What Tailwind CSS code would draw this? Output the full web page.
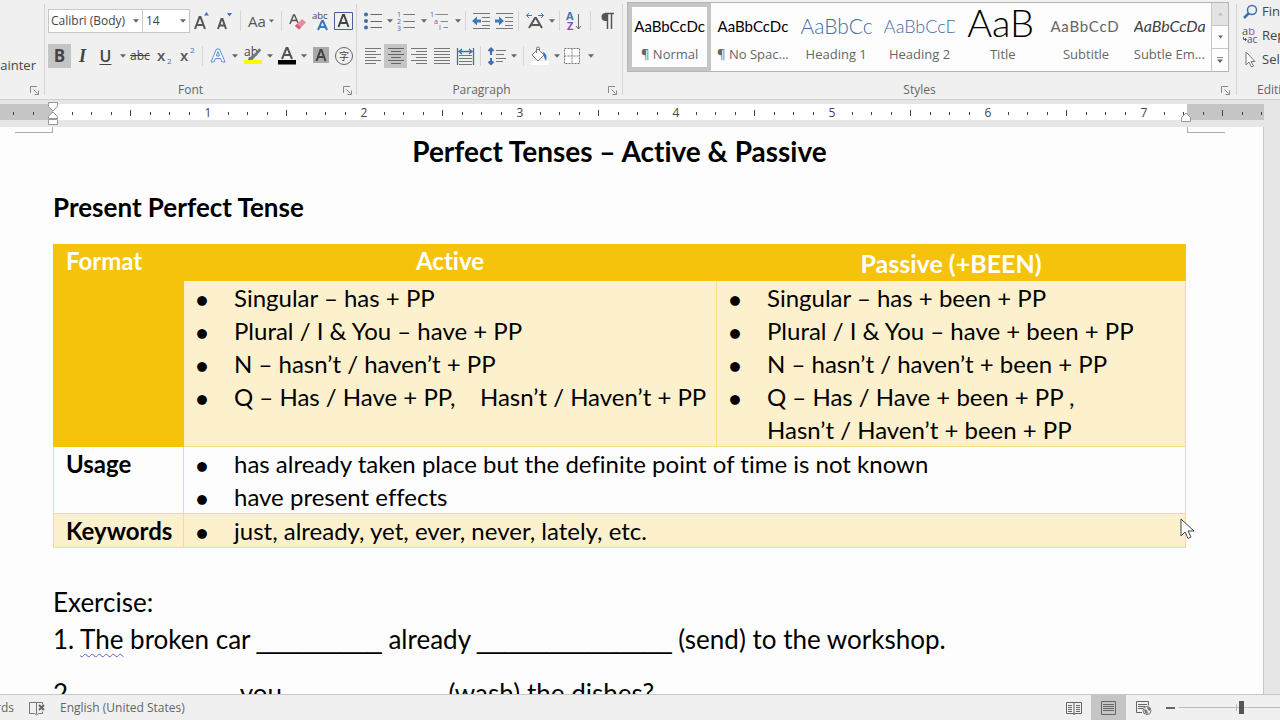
<!DOCTYPE html>
<html lang="en">
<head>
    <meta charset="UTF-8">
    <meta name="viewport" content="width=device-width, initial-scale=1.0">
    <title>Perfect Tenses – Active &amp; Passive</title>
    <script src="https://cdn.jsdelivr.net/npm/@tailwindcss/browser@4"></script>
</head>
<body class="flex flex-col h-screen overflow-hidden bg-[#e6e6e6] font-['Open_Sans','Noto_Sans_CJK_SC',sans-serif] text-[12px] text-[#444]">

    <!-- shared icons -->
    <svg class="hidden" xmlns="http://www.w3.org/2000/svg">
        <symbol id="caret" viewBox="0 0 7 4"><path d="M0 0h7L3.500 4z" fill="#666"/></symbol>
        <symbol id="launcher" viewBox="0 0 9 9"><path d="M.5 7V.5H7M3.500 3.500l4 4M8.500 4.500v4h-4" fill="none" stroke="#888"/></symbol>
    </svg>

    <!-- ribbon -->
    <header class="flex h-[100px] shrink-0 bg-[#f0f0f0] border-b border-[#cfcfcf] overflow-hidden">

        <!-- clipboard -->
        <section class="relative w-[45px] shrink-0 my-1 border-r border-[#d5d5d5]">
            <button class="flex justify-end w-[36px] mt-[51px] text-[13px] leading-5 whitespace-nowrap">Format Painter</button>
            <button class="absolute right-[5px] bottom-0" aria-label="Clipboard options"><svg class="size-[9px]"><use href="#launcher"/></svg></button>
        </section>

        <!-- font -->
        <section class="relative w-[312px] shrink-0 pl-[3px] my-1 border-r border-[#d5d5d5]">
            <div class="flex items-center h-6 mt-[5px]">
                <label class="relative w-[95px] h-6">
                    <span class="sr-only">Font name</span>
                    <select class="appearance-none block w-full h-full pl-[2px] pr-2 bg-white border border-[#c6c6c6] text-[12px]"><option>Calibri (Body)</option></select>
                    <svg class="absolute right-1 top-[10px] w-[6px] h-[4px] pointer-events-none"><use href="#caret"/></svg>
                </label>
                <label class="relative w-[47px] h-6">
                    <span class="sr-only">Font size</span>
                    <select class="appearance-none block w-full h-full pl-[3px] bg-white border border-l-0 border-[#c6c6c6] text-[12px]"><option>14</option></select>
                    <svg class="absolute right-1 top-[10px] w-[6px] h-[4px] pointer-events-none"><use href="#caret"/></svg>
                </label>
                <button class="w-[23px] h-6" aria-label="Grow font"><svg viewBox="0 0 23 24"><path d="M5 20l4.500-12h1L15 20M6.500 16h7" fill="none" stroke="#555" stroke-width="2"/><path d="M14 6.500h5L16.500 3z" fill="#4472b8"/></svg></button>
                <button class="w-[23px] h-6" aria-label="Shrink font"><svg viewBox="0 0 23 24"><path d="M5 20l3.500-10h1L13 20M6.500 16.500h5" fill="none" stroke="#555" stroke-width="2"/><path d="M14 4h5l-2.500 3.500z" fill="#4472b8"/></svg></button>
                <span class="w-px h-5 mx-1 bg-[#d5d5d5]"></span>
                <button class="flex items-center justify-center gap-[3px] w-[32px] h-6 text-[15px] text-[#555]" aria-label="Change case">Aa<svg class="w-[5px] h-[4px]"><use href="#caret"/></svg></button>
                <span class="w-px h-5 mx-1 bg-[#d5d5d5]"></span>
                <button class="w-[23px] h-6" aria-label="Clear formatting"><svg viewBox="0 0 23 24"><path d="M4 15l3.500-9h1L12 14M5.500 11.500h5" fill="none" stroke="#555" stroke-width="1.500"/><path d="M9 17l7-7 4 3.500-7 7z" fill="#ea8a9e"/><path d="M9 17l2-2 4 3.500-2 2z" fill="#d95b7b"/></svg></button>
                <button class="w-[23px] h-6" aria-label="Phonetic guide"><svg viewBox="0 0 23 24"><text x="3" y="10" font-size="9.500" fill="#444">abc</text><path d="M9 21l4-9h1l4 9M10.500 18h6" fill="none" stroke="#3a78bd" stroke-width="2"/></svg></button>
                <button class="w-[23px] h-6" aria-label="Character border"><svg viewBox="0 0 23 24"><path d="M2.500 3.500h18v17h-18z" fill="none" stroke="#4d5f9a"/><path d="M6.500 18l4.500-12h1L16.500 18M8 14h7" fill="none" stroke="#444" stroke-width="2"/></svg></button>
            </div>
            <div class="flex items-center h-6 mt-[11px]">
                <button class="w-[23px] h-6 bg-[#c5c5c5] font-bold text-[17px] leading-6">B</button>
                <button class="w-[23px] h-6 font-['Liberation_Serif',serif] font-bold italic text-[18px] leading-6">I</button>
                <button class="w-[23px] h-6 text-[16px] font-semibold leading-6 underline underline-offset-2">U</button>
                <button class="w-[11px] h-6" aria-label="Underline style"><svg class="w-[6px] h-[4px] mx-auto"><use href="#caret"/></svg></button>
                <button class="w-[24px] h-6 text-[12px] line-through">abc</button>
                <button class="w-[24px] h-6" aria-label="Subscript"><svg viewBox="0 0 24 24"><text x="5" y="17" font-size="15" font-weight="600" fill="#555">x</text><text x="15" y="20" font-size="8" fill="#4472b8">2</text></svg></button>
                <button class="w-[22px] h-6" aria-label="Superscript"><svg viewBox="0 0 22 24"><text x="4" y="17" font-size="15" font-weight="600" fill="#555">x</text><text x="14" y="9" font-size="8" fill="#4472b8">2</text></svg></button>
                <span class="w-px h-5 mx-1 bg-[#d5d5d5]"></span>
                <button class="w-[22px] h-6" aria-label="Text effects"><svg viewBox="0 0 22 24"><path d="M4 18L9.500 5h3L18 18h-3l-1.300-3.500H8.300L7 18zM9.300 12h3.400L11 7.500z" fill="#fff" stroke="#5b8fd0"/></svg></button>
                <button class="w-[11px] h-6" aria-label="Text effects menu"><svg class="w-[6px] h-[4px] mx-auto"><use href="#caret"/></svg></button>
                <button class="w-[24px] h-6" aria-label="Highlight"><svg viewBox="0 0 24 24"><text x="4" y="12" font-size="12" fill="#444">ab</text><path d="M20.500 5.500L12 15l-3 1 1-3M20 5l-7 8" stroke="#777" stroke-width="2" fill="#777"/><path d="M4 16h18v4H4z" fill="#fbfb00"/></svg></button>
                <button class="w-[11px] h-6" aria-label="Highlight colour"><svg class="w-[6px] h-[4px] mx-auto"><use href="#caret"/></svg></button>
                <button class="w-[23px] h-6" aria-label="Font colour"><svg viewBox="0 0 23 24"><path d="M7 15l4.500-11h1L17 15M8.500 11h7" fill="none" stroke="#555" stroke-width="2"/><path d="M3 16h18v4.500H3z" fill="#000"/></svg></button>
                <button class="w-[11px] h-6" aria-label="Font colour menu"><svg class="w-[6px] h-[4px] mx-auto"><use href="#caret"/></svg></button>
                <button class="w-[23px] h-6" aria-label="Character shading"><svg viewBox="0 0 23 24"><path d="M4 3h16v16H4z" fill="#aaa"/><path d="M7.500 17l4-11h1l4 11M9 13h6" fill="none" stroke="#444" stroke-width="2"/></svg></button>
                <button class="w-[23px] h-6" aria-label="Enclose characters"><svg viewBox="0 0 23 24"><circle cx="12" cy="12" r="8.500" fill="none" stroke="#666"/><text x="7" y="16" font-size="10" fill="#444">字</text></svg></button>
            </div>
            <h2 class="absolute inset-x-0 -bottom-[3px] pr-[20px] text-center leading-4 text-[#666]">Font</h2>
            <button class="absolute right-[4px] bottom-0" aria-label="Font options"><svg class="size-[9px]"><use href="#launcher"/></svg></button>
        </section>

        <!-- paragraph -->
        <section class="relative w-[266px] shrink-0 pl-1 my-1 border-r border-[#d5d5d5]">
            <div class="flex items-center h-6 mt-[5px]">
                <button class="w-[23px] h-6" aria-label="Bullets"><svg viewBox="0 0 23 24"><g fill="#3f6ea8"><circle cx="5" cy="5.500" r="2"/><circle cx="5" cy="12" r="2"/><circle cx="5" cy="18.500" r="2"/></g><path d="M9.500 5.500H21M9.500 12.500H21M9.500 18.500H21" stroke="#666"/></svg></button>
                <button class="w-[11px] h-6" aria-label="Bullet library"><svg class="w-[6px] h-[4px] mx-auto"><use href="#caret"/></svg></button>
                <button class="w-[23px] h-6" aria-label="Numbering"><svg viewBox="0 0 23 24"><g font-size="7" fill="#4d63b0"><text x="2" y="8">1</text><text x="2" y="15">2</text><text x="2" y="22">3</text></g><path d="M8.500 5.500H20M8.500 12.500H20M8.500 18.500H20" stroke="#777"/></svg></button>
                <button class="w-[11px] h-6" aria-label="Numbering library"><svg class="w-[6px] h-[4px] mx-auto"><use href="#caret"/></svg></button>
                <button class="w-[23px] h-6" aria-label="Multilevel list"><svg viewBox="0 0 23 24"><g font-size="7" fill="#4d63b0"><text x="1" y="8">1</text><text x="5" y="15">a</text><text x="10" y="21">i</text></g><path d="M6.500 5.500H19M11.500 12.500H19M14.500 18.500H19" stroke="#888"/></svg></button>
                <button class="w-[11px] h-6" aria-label="List library"><svg class="w-[6px] h-[4px] mx-auto"><use href="#caret"/></svg></button>
                <span class="w-px h-5 mx-[2px] bg-[#d5d5d5]"></span>
                <button class="w-[23px] h-6" aria-label="Decrease indent"><svg viewBox="0 0 23 24"><path d="M5 4.500h17M14 8.500h8M14 12.500h8M14 16.500h8M5 19.500h17" stroke="#777"/><path d="M4 12l5-4.500v3h4v3H9v3z" fill="#3f78b8"/></svg></button>
                <button class="w-[23px] h-6" aria-label="Increase indent"><svg viewBox="0 0 23 24"><path d="M5 4.500h17M14 8.500h8M14 12.500h8M14 16.500h8M5 19.500h17" stroke="#777"/><path d="M13 12L8 7.500v3H4v3h4v3z" fill="#3f78b8"/></svg></button>
                <span class="w-px h-5 mx-1 bg-[#d5d5d5]"></span>
                <button class="w-[23px] h-6" aria-label="Character scaling"><svg viewBox="0 0 23 24"><path d="M6 19l6-10h1l6 10M8.500 16h8" fill="none" stroke="#555" stroke-width="2"/><path d="M3.500 6.500H9M6 4L3.500 6.500 6 9M15 6.500h5.500M18 4l2.500 2.500L18 9" fill="none" stroke="#3f78b8"/></svg></button>
                <button class="w-[11px] h-6" aria-label="Scaling menu"><svg class="w-[6px] h-[4px] mx-auto"><use href="#caret"/></svg></button>
                <span class="w-px h-5 mx-[2px] bg-[#d5d5d5]"></span>
                <button class="w-[23px] h-6" aria-label="Sort"><svg viewBox="0 0 23 24"><g font-size="11" font-weight="bold"><text x="4" y="11" fill="#3f78b8">A</text><text x="5" y="21" fill="#8a4fb5">Z</text></g><path d="M16.500 5v15M14 17l2.500 3 2.500-3" fill="none" stroke="#666"/></svg></button>
                <span class="w-px h-5 mx-[5px] bg-[#d5d5d5]"></span>
                <button class="w-[23px] h-6" aria-label="Show marks"><svg viewBox="0 0 23 24"><path d="M11 4H9.500a4 4 0 000 8H11z" fill="#555"/><path d="M9 4.500h9M11.500 4v16M15.500 4v16" stroke="#555" stroke-width="1.500"/></svg></button>
            </div>
            <div class="flex items-center h-6 mt-[11px]">
                <button class="w-[23px] h-6" aria-label="Align left"><svg viewBox="0 0 23 24"><path d="M4 4.500h16M4 7.500h11M4 10.500h16M4 13.500h11M4 16.500h16M4 19.500h11" stroke="#777"/></svg></button>
                <button class="w-[23px] h-6 bg-[#c5c5c5]" aria-label="Center"><svg viewBox="0 0 23 24"><path d="M4 4.500h16M7 7.500h10M4 10.500h16M7 13.500h10M4 16.500h16M7 19.500h10" stroke="#666"/></svg></button>
                <button class="w-[23px] h-6" aria-label="Align right"><svg viewBox="0 0 23 24"><path d="M4 4.500h16M9 7.500h11M4 10.500h16M9 13.500h11M4 16.500h16M9 19.500h11" stroke="#777"/></svg></button>
                <button class="w-[23px] h-6" aria-label="Justify"><svg viewBox="0 0 23 24"><path d="M4 4.500h16M4 7.500h16M4 10.500h16M4 13.500h16M4 16.500h16M4 19.500h16" stroke="#777"/></svg></button>
                <button class="w-[23px] h-6" aria-label="Distribute"><svg viewBox="0 0 23 24"><path d="M4.500 4v17M20.500 4v17M6 7.500h13M9 5L6 7.500 9 10M16 5l3 2.500-3 2.500" fill="none" stroke="#3f6eb0" stroke-width="1.300"/><path d="M6 11.500h13M6 14.500h13M6 17.500h13M6 20.500h13" stroke="#777"/></svg></button>
                <span class="w-px h-5 mx-1 bg-[#d5d5d5]"></span>
                <button class="w-[23px] h-6" aria-label="Line spacing"><svg viewBox="0 0 23 24"><path d="M6 5v6M6 14v6M3.500 7L6 4.500 8.500 7M3.500 17.500L6 20l2.500-2.500" fill="none" stroke="#3f6eb0" stroke-width="2"/><path d="M11 6.500h10M11 10.500h8M11 14.500h10M11 17.500h7" stroke="#777"/></svg></button>
                <button class="w-[11px] h-6" aria-label="Line spacing menu"><svg class="w-[6px] h-[4px] mx-auto"><use href="#caret"/></svg></button>
                <span class="w-px h-5 mx-1 bg-[#d5d5d5]"></span>
                <button class="w-[23px] h-6" aria-label="Shading"><svg viewBox="0 0 23 24"><path d="M3 17h18v4H3z" fill="#fff"/><path d="M4 11l6-6 6 6-6 6zM8.500 9V4.500a1.500 1.500 0 013 0V7" fill="#fff" stroke="#777"/><path d="M15 8q5 2 3 9l-2-4z" fill="#3f78b8"/></svg></button>
                <button class="w-[11px] h-6" aria-label="Shading colour"><svg class="w-[6px] h-[4px] mx-auto"><use href="#caret"/></svg></button>
                <button class="w-[23px] h-6" aria-label="Borders"><svg viewBox="0 0 23 24"><path d="M2.500 4.500h15v15h-15zM10 4.500v15M2.500 12h15" fill="#fff" stroke="#777" stroke-dasharray="2 1"/></svg></button>
                <button class="w-[11px] h-6" aria-label="Borders menu"><svg class="w-[6px] h-[4px] mx-auto"><use href="#caret"/></svg></button>
            </div>
            <h2 class="absolute inset-x-0 -bottom-[3px] pr-[16px] text-center leading-4 text-[#666]">Paragraph</h2>
            <button class="absolute right-[5px] bottom-0" aria-label="Paragraph options"><svg class="size-[9px]"><use href="#launcher"/></svg></button>
        </section>

        <!-- styles gallery -->
        <section class="relative flex-1 min-w-0 pl-1 pr-[7px] pt-[2px]">
            <div class="flex h-[70px] bg-[#fdfdfd] border border-[#b5b5b5] text-[13px]">
                <div class="grid grid-cols-7 flex-1 min-w-0 text-[#666] text-center">
                    <button class="min-w-0 overflow-hidden border-4 border-[#c5c5c5]"><span class="block h-[34px] leading-8 overflow-hidden whitespace-nowrap font-['Lato',sans-serif] text-[15px] text-black">AaBbCcDc</span><span class="block leading-5 whitespace-nowrap">¶ Normal</span></button>
                    <button class="min-w-0 py-1 px-1 overflow-hidden"><span class="block h-[34px] leading-8 overflow-hidden whitespace-nowrap font-['Lato',sans-serif] text-[15px] text-black">AaBbCcDc</span><span class="block leading-5 whitespace-nowrap">¶ No Spac...</span></button>
                    <button class="min-w-0 py-1 px-[6px] overflow-hidden"><span class="block h-[34px] leading-8 overflow-hidden whitespace-nowrap text-left font-['Lato',sans-serif] font-light text-[21px] text-[#3f6ea8]">AaBbCcD</span><span class="block leading-5 whitespace-nowrap">Heading 1</span></button>
                    <button class="min-w-0 py-1 px-[6px] overflow-hidden"><span class="block h-[34px] leading-8 overflow-hidden whitespace-nowrap text-left font-['Lato',sans-serif] font-light text-[18px] text-[#3f6ea8]">AaBbCcD</span><span class="block leading-5 whitespace-nowrap">Heading 2</span></button>
                    <button class="min-w-0 py-1 px-[6px] overflow-hidden"><span class="block h-[34px] leading-6 overflow-hidden whitespace-nowrap text-left font-['Lato',sans-serif] font-light text-[38px] text-black">AaB</span><span class="block leading-5 whitespace-nowrap">Title</span></button>
                    <button class="min-w-0 py-1 px-[6px] overflow-hidden"><span class="block h-[34px] leading-8 overflow-hidden whitespace-nowrap text-left font-['Lato',sans-serif] text-[15px] tracking-wider text-[#666]">AaBbCcD</span><span class="block leading-5 whitespace-nowrap">Subtitle</span></button>
                    <button class="min-w-0 py-1 px-[6px] overflow-hidden"><span class="block h-[34px] leading-8 overflow-hidden whitespace-nowrap text-left font-['Lato',sans-serif] italic text-[16px] text-[#404040]">AaBbCcDa</span><span class="block leading-5 whitespace-nowrap">Subtle Em...</span></button>
                </div>
                <div class="flex flex-col w-[17px] border-l border-[#c6c6c6]">
                    <button class="flex-1 bg-[#e3e3e3]" aria-label="Previous styles"><svg class="w-[5px] h-[4px] mx-auto rotate-180 opacity-30"><use href="#caret"/></svg></button>
                    <button class="flex-1 border-y border-[#c6c6c6]" aria-label="Next styles"><svg class="w-[5px] h-[4px] mx-auto"><use href="#caret"/></svg></button>
                    <button class="flex-1" aria-label="All styles"><svg class="w-[6px] h-[6px] mx-auto" viewBox="0 0 7 7"><path d="M0 .5h7" stroke="#666"/><path d="M0 3h7L3.500 7z" fill="#666"/></svg></button>
                </div>
            </div>
            <h2 class="absolute inset-x-0 bottom-[1px] pr-[20px] text-center leading-4 text-[#666]">Styles</h2>
            <button class="absolute right-[6px] bottom-1" aria-label="Styles options"><svg class="size-[9px]"><use href="#launcher"/></svg></button>
        </section>

        <!-- editing -->
        <section class="relative w-[44px] shrink-0 pl-[5px] my-1 border-l border-[#d5d5d5] text-[13px] whitespace-nowrap">
            <button class="flex items-center gap-1 h-6 -mt-1"><svg class="size-4 shrink-0" viewBox="0 0 16 16"><circle cx="10" cy="6" r="4.500" fill="none" stroke="#3f6ea8" stroke-width="1.500"/><path d="M7 9l-5 5" stroke="#3f6ea8" stroke-width="2.500"/></svg>Find</button>
            <button class="flex items-center gap-1 h-6"><svg class="size-4 shrink-0" viewBox="0 0 16 16"><text x="0" y="7" font-size="11" fill="#555">a<tspan fill="#8a4fb5">b</tspan></text><text x="5" y="15" font-size="10" fill="#555">ac</text><path d="M1.500 9v2.500h3M3 10L4.500 11.500 3 13" fill="none" stroke="#555"/></svg>Replace</button>
            <button class="flex items-center gap-1 h-6"><svg class="size-4 shrink-0" viewBox="0 0 16 16"><path d="M4 0v13l3-3 2.500 5 2-1L9 9.500h4z" fill="#fff" stroke="#777"/></svg>Select</button>
            <h2 class="absolute left-5 -bottom-[3px] text-[12px] leading-4 text-[#666]">Editing</h2>
        </section>
    </header>

    <!-- ruler -->
    <div class="relative flex h-[16px] mt-1 mb-[7px] mr-4 shrink-0">
        <div class="w-[53px] bg-[#c5c5c5]"></div>
        <div class="flex-1 bg-white"></div>
        <div class="w-[77px] bg-[#c5c5c5]"></div>
        <svg id="ruler" class="absolute inset-0 w-full h-full" font-size="12" fill="#444"></svg>
        <svg class="absolute left-[47px] -top-[3px] w-[12px] h-[27px]" viewBox="0 0 12 27"><path d="M1.500 1.500h9v4L6 10 1.500 5.500zM1.500 17.500v-2L6 11l4.500 4.500v2zM1.500 18.500h9v5h-9z" fill="#fff" stroke="#999"/></svg>
        <svg class="absolute right-[72px] top-[8px] w-[12px] h-[10px]" viewBox="0 0 12 10"><path d="M1.500 9.500v-4L6 1l4.500 4.500v4z" fill="#fff" stroke="#999"/></svg>
    </div>

    <!-- page -->
    <main class="relative flex-1 min-h-0 mr-4 bg-[#fdfdfd] border-r border-[#c6c6c6] overflow-hidden font-['Lato',sans-serif] [font-variant-ligatures:none] text-[24px] text-black">
        <div class="absolute left-[15px] top-0 w-[38px] h-[6px] border-r border-b border-[#aaa]"></div>
        <div class="absolute right-[38px] top-0 w-[38px] h-[6px] border-l border-b border-[#aaa]"></div>

        <div class="pl-[53px] pr-[77px] pt-[8px]">
            <h1 class="text-center font-bold text-[28px] leading-8">Perfect Tenses – Active &amp; Passive</h1>
            <h2 class="mt-[24px] font-bold text-[26px] leading-8">Present Perfect Tense</h2>

            <table class="w-full mt-[21px] table-fixed border-collapse text-left">
                <colgroup><col class="w-[130px]"><col class="w-[533px]"><col></colgroup>
                <tr class="h-[36px] bg-[#f5c30c] text-white">
                    <th rowspan="2" class="pl-3 align-top font-bold leading-8 border border-[#f5c30c]">Format</th>
                    <th class="text-center align-top font-bold leading-8 border border-[#f5c30c] border-l-[#fbe08a]">Active</th>
                    <th class="text-center font-bold text-[25px] leading-8 border border-[#f5c30c]">Passive (+BEEN)</th>
                </tr>
                <tr class="bg-[#fdf1cd]">
                    <td class="align-top border border-[#f8dc86]">
                        <ul class="pl-[50px] leading-[33px] whitespace-pre [&>li]:before:content-['●'] [&>li]:before:inline-block [&>li]:before:w-[38px] [&>li]:before:-ml-[38px] [&>li]:before:text-[20px] [&>li]:before:leading-none"><li>Singular – has + PP</li><li>Plural / I &amp; You – have + PP</li><li>N – hasn’t / haven’t + PP</li><li>Q – Has / Have + PP,    Hasn’t / Haven’t + PP</li></ul>
                    </td>
                    <td class="align-top border border-[#f8dc86]">
                        <ul class="pl-[50px] leading-[33px] whitespace-pre [&>li]:before:content-['●'] [&>li]:before:inline-block [&>li]:before:w-[38px] [&>li]:before:-ml-[38px] [&>li]:before:text-[20px] [&>li]:before:leading-none"><li>Singular – has + been + PP</li><li>Plural / I &amp; You – have + been + PP</li><li>N – hasn’t / haven’t + been + PP</li><li>Q – Has / Have + been + PP ,
Hasn’t / Haven’t + been + PP</li></ul>
                    </td>
                </tr>
                <tr>
                    <th class="pl-3 align-top font-bold leading-[33px] border border-[#f8dc86]">Usage</th>
                    <td colspan="2" class="border border-[#f8dc86]">
                        <ul class="pl-[50px] leading-[33px] whitespace-pre [&>li]:before:content-['●'] [&>li]:before:inline-block [&>li]:before:w-[38px] [&>li]:before:-ml-[38px] [&>li]:before:text-[20px] [&>li]:before:leading-none"><li>has already taken place but the definite point of time is not known</li><li>have present effects</li></ul>
                    </td>
                </tr>
                <tr class="bg-[#fdf1cd]">
                    <th class="pl-3 align-top font-bold leading-[33px] border border-[#f8dc86]">Keywords</th>
                    <td colspan="2" class="border border-[#f8dc86]">
                        <ul class="pl-[50px] leading-[33px] whitespace-pre [&>li]:before:content-['●'] [&>li]:before:inline-block [&>li]:before:w-[38px] [&>li]:before:-ml-[38px] [&>li]:before:text-[20px] [&>li]:before:leading-none"><li>just, already, yet, ever, never, lately, etc.</li></ul>
                    </td>
                </tr>
            </table>

            <div class="mt-[36px] text-[26px] leading-[37px] whitespace-nowrap [&_i]:not-italic [&_i]:font-['Liberation_Sans',sans-serif] [&_i]:text-[25px] [&_i]:leading-none">
                <p>Exercise:</p>
                <p>1. <span class="underline decoration-wavy decoration-1 decoration-[#5b5bd6] underline-offset-4">The</span> broken car <i>_________</i> already <i>______________</i> (send) to the workshop.</p>
                <p class="mt-[17px]">2. <i>___________</i> you <i>___________</i> (wash) the dishes?</p>
            </div>
        </div>

        <!-- mouse pointer -->
        <svg class="absolute left-[1180px] top-[391px] w-[15px] h-[22px]" viewBox="0 0 15 22"><path d="M1 1v17l4-4 3 6.500 3-1.500-3-6h6z" fill="#fff" stroke="#444"/></svg>
    </main>

    <!-- status bar -->
    <footer class="flex items-center h-[26px] shrink-0 bg-[#f0f0f0] border-t border-[#c6c6c6] text-[#666] overflow-hidden">
        <span class="flex justify-end w-[14px] shrink-0">Words</span>
        <button class="ml-[14px]" aria-label="Proofing"><svg class="w-[18px] h-4" viewBox="0 0 18 16"><path d="M8.500 2.500h-7v11h5l2 1.500 2-1.500h4v-2M8.500 3v11M8.500 2.500h6v2" fill="none" stroke="#777"/><path d="M11 5l5 5M16 5l-5 5" stroke="#666" stroke-width="2"/></svg></button>
        <button class="ml-[14px] text-[12px]">English (United States)</button>
        <div class="flex items-center h-full ml-auto">
            <button class="flex items-center justify-center w-[35px] h-full" aria-label="Read mode"><svg class="w-4 h-[14px]" viewBox="0 0 16 14"><path d="M8 1.500H.5v11H8l0 1 0-1h7.500v-11zM8 1v12.500M2 4.500h4M2 6.500h4M2 8.500h4M2 10.500h4M10 4.500h4M10 6.500h4M10 8.500h4M10 10.500h4" fill="none" stroke="#666"/></svg></button>
            <button class="flex items-center justify-center w-[35px] h-full bg-[#c5c5c5]" aria-label="Print layout"><svg class="w-[15px] h-[14px]" viewBox="0 0 15 14"><path d="M.5.5h14v13H.5zM2 3.500h11M2 5.500h11M2 7.500h11M2 9.500h11" fill="none" stroke="#666"/></svg></button>
            <button class="flex items-center justify-center w-[35px] h-full" aria-label="Web layout"><svg class="w-4 h-[14px]" viewBox="0 0 16 14"><path d="M6 11.500H.5V.5h12v4M2 3.500h9M2 5.500h7M2 7.500h5" fill="none" stroke="#666"/><circle cx="11" cy="9.500" r="4" fill="#eee" stroke="#777"/><path d="M8 8l3 1 1 4-3-1zM11 6l3 1v3l-2-1z" fill="#777"/></svg></button>
            <button class="flex items-center justify-center w-[18px] h-full" aria-label="Zoom out"><span class="w-[9px] h-[2px] bg-[#666]"></span></button>
            <div class="relative w-[101px] h-full">
                <span class="absolute left-[57px] top-[9px] w-px h-[7px] bg-[#bbb]"></span>
                <label class="sr-only" for="zoom">Zoom</label>
                <input id="zoom" type="range" min="0" max="112" value="61" class="absolute left-0 top-0 block appearance-none w-[116px] h-full bg-transparent [&::-webkit-slider-runnable-track]:h-px [&::-webkit-slider-runnable-track]:bg-[#bbb] [&::-webkit-slider-thumb]:appearance-none [&::-webkit-slider-thumb]:w-[5px] [&::-webkit-slider-thumb]:h-[13px] [&::-webkit-slider-thumb]:-mt-[6px] [&::-webkit-slider-thumb]:bg-[#555]">
            </div>
        </div>
    </footer>

    <script>
        // ruler: one inch is 156px, eight marks per inch, zero at the left margin
        const ruler = document.getElementById('ruler');
        const inch = 156;
        const origin = 52;
        let marks = '';
        for (let i = -2; i <= 62; i++) {
            const x = Math.round(origin + i * inch / 8);
            if (i === 0) continue;
            if (i % 8 === 0) {
                marks += `<text x="${x}" y="13" text-anchor="middle">${i / 8}</text>`;
            } else {
                const h = i % 4 === 0 ? 6 : 3;
                marks += `<rect x="${x}" y="${Math.round(9 - h / 2)}" width="1" height="${h}"/>`;
            }
        }
        ruler.innerHTML = marks;
    </script>
</body>
</html>
